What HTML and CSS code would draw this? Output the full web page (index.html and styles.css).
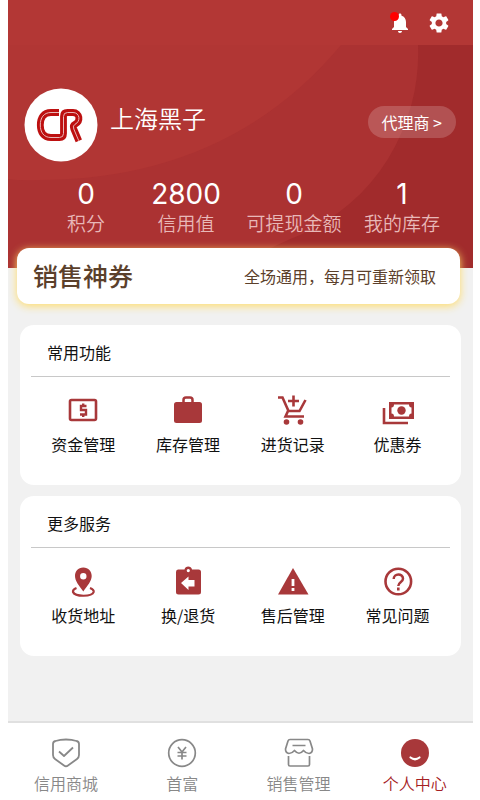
FILE: index.html
```html
<!DOCTYPE html>
<html lang="zh-CN">
<head>
<meta charset="utf-8">
<meta name="viewport" content="width=device-width, initial-scale=1">
<title>个人中心</title>
<link rel="stylesheet" href="styles.css">
</head>
<body>
<div class="app">
  <header class="hero">
    <div class="toolbar">
      <button class="icon-button" type="button" aria-label="消息">
        <svg width="24" height="24" viewBox="0 0 24 24" fill="currentColor"><path d="M12 22c1.100 0 2-.9 2-2h-4c0 1.100.89 2 2 2zm6-6v-5c0-3.070-1.640-5.640-4.500-6.320V4c0-.83-.67-1.500-1.500-1.500s-1.500.67-1.500 1.500v.68C7.630 5.360 6 7.920 6 11v5l-2 2v1h16v-1z"/></svg>
        <span class="dot"></span>
      </button>
      <button class="icon-button" type="button" aria-label="设置">
        <svg width="24" height="24" viewBox="0 0 24 24" fill="currentColor"><path d="M19.140 12.940c.04-.3.060-.61.060-.94 0-.32-.02-.64-.07-.94l2.030-1.580c.18-.14.230-.41.120-.61l-1.920-3.320c-.12-.22-.37-.29-.59-.22l-2.390.96c-.5-.38-1.030-.7-1.620-.94l-.36-2.540c-.04-.24-.24-.41-.48-.41h-3.840c-.24 0-.43.170-.47.410l-.36 2.540c-.59.240-1.130.570-1.620.940l-2.390-.96c-.22-.08-.47 0-.59.220L2.740 8.870c-.12.210-.08.470.120.610l2.030 1.580c-.05.3-.09.630-.09.940s.02.640.070.940l-2.030 1.580c-.18.140-.23.410-.12.610l1.920 3.320c.12.220.370.290.590.220l2.390-.96c.5.380 1.030.7 1.620.940l.36 2.540c.05.240.240.410.480.410h3.840c.24 0 .44-.17.470-.41l.36-2.540c.59-.24 1.130-.56 1.620-.94l2.390.96c.22.080.470 0 .59-.22l1.920-3.320c.12-.22.070-.47-.12-.61l-2.010-1.580zM12 15.600c-1.980 0-3.600-1.620-3.600-3.600s1.620-3.600 3.600-3.600 3.600 1.620 3.600 3.600-1.620 3.600-3.600 3.600z"/></svg>
      </button>
    </div>
    <div class="hero-body">
      <svg class="hero-waves" viewBox="0 0 465 223" preserveAspectRatio="none" aria-hidden="true">
        <path fill="#b13634" d="M0 0H333Q220 135 30 135Q14 136 0 134Z"/>
        <path fill="#a12b2c" d="M410 0H465V223H225Q262 202 292 190A195 198 0 0 0 410 0Z"/>
      </svg>
      <div class="profile">
        <svg class="avatar" width="74" height="74" viewBox="0 0 74 74" role="img" aria-label="CR">
          <circle cx="37" cy="37" r="36.500" fill="#fff"/>
          <g fill="none">
            <path d="M35 24.500H27C19.500 24.500 16.300 30 16.300 37S19.500 49.500 27 49.500H35.500Q39.500 49.500 39.500 45.500V28.500Q39.500 24.500 43.500 24.500H49C56 24.500 57 33.500 51 36.300Q48.500 37.600 49.800 41L54.800 52.800" stroke="#bd1010" stroke-width="6.800"/>
            <path d="M35 24.500H27C19.500 24.500 16.300 30 16.300 37S19.500 49.500 27 49.500H35.500Q39.500 49.500 39.500 45.500V28.500Q39.500 24.500 43.500 24.500H49C56 24.500 57 33.500 51 36.300Q48.500 37.600 49.800 41L54.800 52.800" stroke="#e9b8b8" stroke-width="1"/>
          </g>
        </svg>
        <h1 class="name">上海黑子</h1>
        <button class="role" type="button">代理商 &gt;</button>
      </div>
      <dl class="stats">
        <div><dd>0</dd><dt>积分</dt></div>
        <div><dd>2800</dd><dt>信用值</dt></div>
        <div><dd>0</dd><dt>可提现金额</dt></div>
        <div><dd>1</dd><dt>我的库存</dt></div>
      </dl>
    </div>
  </header>

  <main>
    <a class="coupon" href="#coupon"><strong>销售神券</strong><span>全场通用，每月可重新领取</span></a>

    <section class="panel">
      <h2>常用功能</h2>
      <nav class="grid" aria-label="常用功能">
        <a href="#funds"><svg width="34" height="34" viewBox="0 0 34 34"><rect x="4" y="7" width="26" height="20" rx="1.500" fill="none" stroke="#a8383a" stroke-width="2.600"/><path d="M20.500 13H15v4h5v4.500h-6M17.200 10.500v2.500M17.200 21.500v2.500" fill="none" stroke="#a8383a" stroke-width="2.400"/></svg>资金管理</a>
        <a href="#stock"><svg width="34" height="34" viewBox="0 0 34 34"><rect x="3" y="9" width="28" height="21" rx="2.500" fill="#a8383a"/><path d="M12.500 10V7Q12.500 4.500 15 4.500H19Q21.500 4.500 21.500 7V10" fill="none" stroke="#a8383a" stroke-width="2.500"/></svg>库存管理</a>
        <a href="#orders"><svg width="34" height="34" viewBox="0 0 34 34"><g fill="none" stroke="#a8383a" stroke-width="2.600"><path d="M2 4.500H6.500L12.500 18H23.500L29.500 7M12 18L9.500 23.500H28M17.500 2.500V13.500M12 8H23"/></g><g fill="#a8383a"><circle cx="10.500" cy="29" r="2.800"/><circle cx="24.500" cy="29" r="2.800"/></g></svg>进货记录</a>
        <a href="#vouchers"><svg width="34" height="34" viewBox="0 0 34 34"><path d="M3 15V30H27" fill="none" stroke="#a8383a" stroke-width="2.600"/><path fill="#a8383a" fill-rule="evenodd" d="M8 9H33V26H8ZM13 11.500Q13 14.500 10.500 14.500V20.500Q13 20.500 13 23.500H28Q28 20.500 30.500 20.500V14.500Q28 14.500 28 11.500Z"/><circle cx="20.500" cy="17.500" r="4.200" fill="#a8383a"/></svg>优惠券</a>
      </nav>
    </section>

    <section class="panel">
      <h2>更多服务</h2>
      <nav class="grid" aria-label="更多服务">
        <a href="#address"><svg width="34" height="34" viewBox="0 0 34 34"><path fill="#a8383a" fill-rule="evenodd" d="M17.300 3.500C12 3.500 9 7.500 9 12C9 17 13 21.500 17.300 27.500C21.500 21.500 25.700 17 25.700 12C25.700 7.500 22.500 3.500 17.300 3.500ZM17.300 9A3.200 3.200 0 1 1 17.300 15.400A3.200 3.200 0 1 1 17.300 9Z"/><path d="M10.500 24Q6.500 25.500 7 28C9 33 26 33 27.700 28Q28 25.500 24 24" fill="none" stroke="#a8383a" stroke-width="2.200"/></svg>收货地址</a>
        <a href="#returns"><svg width="34" height="34" viewBox="0 0 34 34"><path fill="#a8383a" fill-rule="evenodd" d="M7 5.500H13.500C14 1.500 20.500 1.500 21 5.500H27.500Q30 5.500 30 8V28Q30 30.500 27.500 30.500H7.500Q5 30.500 5 28V8Q5 5.500 7 5.500ZM17.300 5A1.600 1.600 0 1 0 17.300 8.200A1.600 1.600 0 1 0 17.300 5ZM10 19L17.500 12.500V16H23.500V22.500H17.500V26Z"/></svg>换/退货</a>
        <a href="#service"><svg width="34" height="34" viewBox="0 0 34 34"><path d="M17 4L32.500 30.500H2Z" fill="#a8383a"/><path d="M17 15V22M17 24V27" stroke="#fff" stroke-width="2.800"/></svg>售后管理</a>
        <a href="#faq"><svg width="34" height="34" viewBox="0 0 34 34"><circle cx="17.300" cy="17.500" r="12.800" fill="none" stroke="#a8383a" stroke-width="2.600"/><path d="M12.700 15C12.700 9 22 9 22 14.800C22 18 17.300 18 17.300 22" fill="none" stroke="#a8383a" stroke-width="2.500"/><path d="M17.300 23.500V26.500" stroke="#a8383a" stroke-width="2.600"/></svg>常见问题</a>
      </nav>
    </section>
  </main>

  <nav class="tabs" aria-label="主导航">
    <a href="#mall"><svg width="32" height="32" viewBox="0 0 32 32" fill="none" stroke="#888" stroke-width="1.800" stroke-linejoin="round"><path d="M16 2.500Q22 2.500 26.500 4Q29 4.500 29 7V18Q29 20.500 27 22L18 28.500Q16 30 14 28.500L5 22Q3 20.500 3 18V7Q3 4.500 5.500 4Q10 2.500 16 2.500Z"/><path d="M9 14.500L14 19L23 10.500"/></svg>信用商城</a>
    <a href="#top"><svg width="32" height="32" viewBox="0 0 32 32" fill="none" stroke="#888" stroke-width="1.700"><circle cx="16" cy="16" r="13.300"/><path d="M12 10L16 15L20 10M16 15V22.500M11.500 15.500H20.500M11.500 19H20.500"/></svg>首富</a>
    <a href="#sales"><svg width="32" height="32" viewBox="0 0 32 32" fill="none" stroke="#888" stroke-width="1.700" stroke-linejoin="round"><path d="M7 2.500H25Q26.500 2.500 27 4L29.500 12Q29.500 16 26 16.500Q23 16.500 20.500 13.500Q16 19 11.500 13.500Q9 16.500 6 16.500Q2.500 16 2.500 12L5 4Q5.500 2.500 7 2.500ZM9.500 8.500H22.500M5.500 19V27.500Q5.500 29 7 29H25Q26.500 29 26.500 27.500V19"/></svg>销售管理</a>
    <a class="current" href="#me" aria-current="page"><svg width="32" height="32" viewBox="0 0 32 32"><circle cx="16" cy="16" r="14" fill="#a8383a"/><path d="M11.500 20.500Q16 24 20.500 20.500" fill="none" stroke="#fff" stroke-width="2.200" stroke-linecap="round"/></svg>个人中心</a>
  </nav>
</div>
</body>
</html>
```
FILE: styles.css
```css
* {
  box-sizing: border-box;
}

body {
  margin: 0 7px 0 8px;
  background: #fff;
  color: #111;
  font: 16px/24px "Noto Sans CJK SC", sans-serif;
}

a {
  color: inherit;
  text-decoration: none;
}

button {
  border: 0;
  padding: 0;
  color: #fff;
  font: inherit;
}

svg {
  display: block;
}

h1, h2, dl, dd {
  margin: 0;
  font-weight: 400;
}

.app {
  display: flex;
  flex-direction: column;
  min-height: 100vh;
  background: #f1f1f1;
}

.hero {
  background: #b33735;
  color: #fff;
}

.toolbar {
  display: flex;
  justify-content: flex-end;
  align-items: center;
  gap: 15px;
  height: 45px;
  padding: 0 22px;
}

.icon-button {
  position: relative;
  background: none;
}

.dot {
  position: absolute;
  top: 1px;
  left: 2px;
  width: 9px;
  height: 9px;
  border-radius: 50%;
  background: #f00;
}

.hero-body {
  position: relative;
  padding: 43px 17px 33px 16px;
  background: #ab3232;
}

.hero-waves {
  position: absolute;
  inset: 0;
  width: 100%;
  height: 100%;
}

.profile {
  position: relative;
  display: flex;
  align-items: center;
}

.name {
  flex: 1;
  padding: 0 0 14px 12px;
  font-size: 24px;
  line-height: 32px;
  font-weight: 350;
}

.role {
  height: 32px;
  margin-bottom: 7px;
  padding: 0 14px;
  border-radius: 16px;
  background: rgba(255, 255, 255, 0.18);
}

.stats {
  position: relative;
  display: grid;
  grid-template-columns: 92px 1fr 1fr 1fr;
  margin: 16px 0 0 16px;
  text-align: center;
}

.stats div {
  display: flex;
  flex-direction: column;
}

.stats dd {
  font: 28px/32px Inter, "Noto Sans CJK SC", sans-serif;
}

.stats dt {
  color: #e8b8b8;
  font-size: 19px;
  line-height: 25px;
  font-weight: 350;
  white-space: nowrap;
}

main {
  flex: 1;
}

.coupon {
  position: relative;
  display: flex;
  justify-content: space-between;
  align-items: center;
  height: 56px;
  margin: -20px 13px 0 9px;
  padding: 0 24px 0 16px;
  border-radius: 12px;
  background: #fff;
  box-shadow: 0 2px 8px #ffdc68;
  color: #5b402b;
}

.coupon strong {
  padding-bottom: 2px;
  font-size: 25px;
  font-weight: 500;
}

.panel {
  height: 160px;
  margin: 21px 12px 0 12px;
  padding: 0 11px;
  border-radius: 14px;
  background: #fff;
}

.panel + .panel {
  margin-top: 11px;
}

.panel h2 {
  padding: 15px 16px 12px;
  border-bottom: 1px solid #c8c8c8;
  font-size: 16px;
}

.grid {
  display: grid;
  grid-template-columns: repeat(4, 1fr);
  padding-top: 16px;
}

.grid a {
  display: flex;
  flex-direction: column;
  align-items: center;
  gap: 5px;
}

.tabs {
  display: grid;
  grid-template-columns: repeat(4, 1fr);
  height: 79px;
  padding-top: 14px;
  border-top: 2px solid #e0e0e0;
  background: #fff;
  color: #888;
  font-weight: 350;
}

.tabs a {
  display: flex;
  flex-direction: column;
  align-items: center;
  gap: 2px;
}

.tabs .current {
  color: #a52023;
}
```
